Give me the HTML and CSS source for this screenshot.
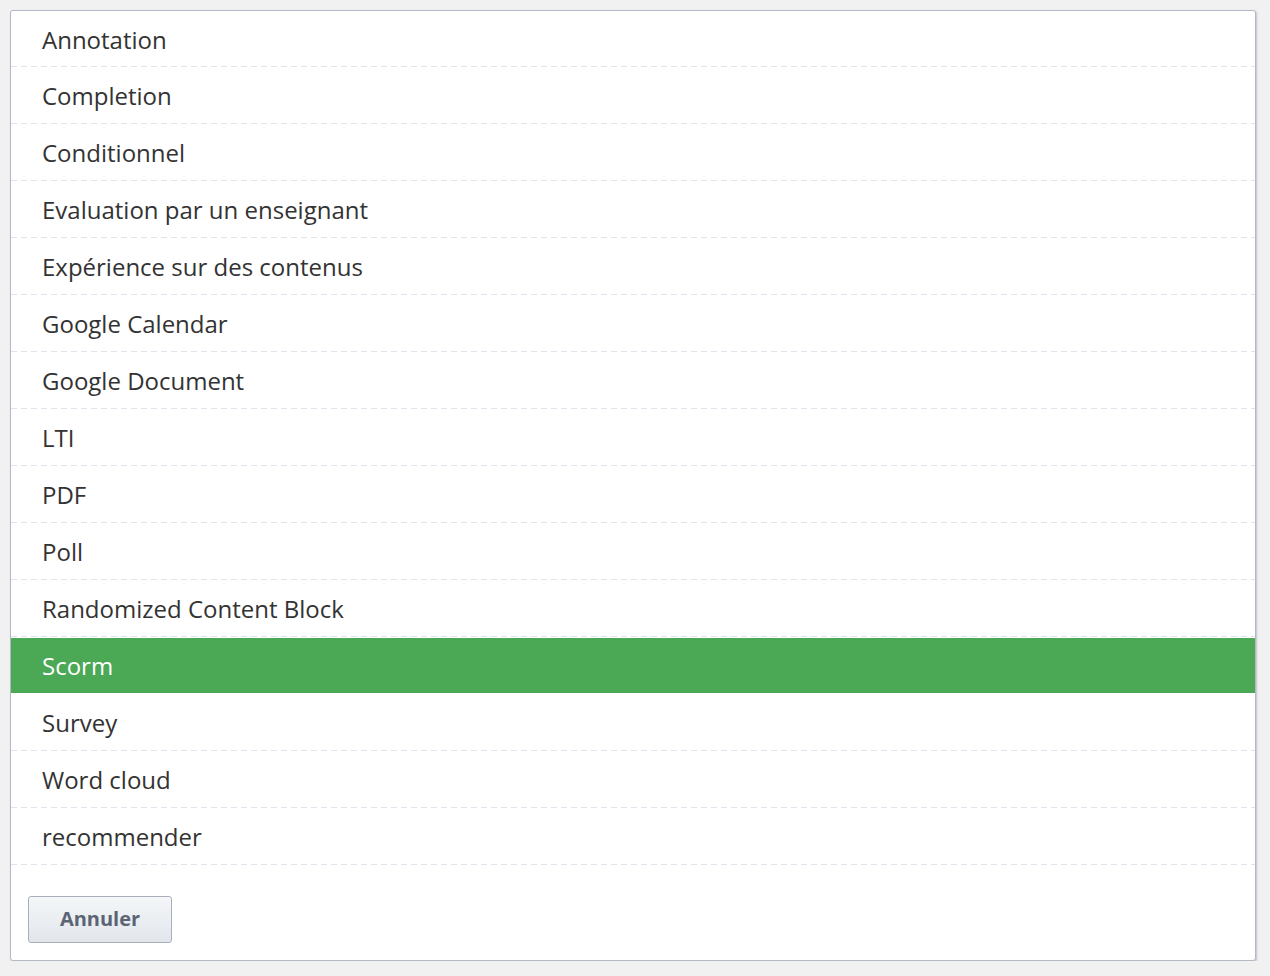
FILE: index.html
```html
<!DOCTYPE html>
<html lang="fr">
<head>
<meta charset="utf-8">
<title>Composants</title>
<link rel="stylesheet" href="styles.css">
</head>
<body>
<div class="panel">
  <ul class="list">
    <li class="item first">Annotation</li>
    <li class="item">Completion</li>
    <li class="item">Conditionnel</li>
    <li class="item">Evaluation par un enseignant</li>
    <li class="item">Expérience sur des contenus</li>
    <li class="item">Google Calendar</li>
    <li class="item">Google Document</li>
    <li class="item">LTI</li>
    <li class="item">PDF</li>
    <li class="item">Poll</li>
    <li class="item">Randomized Content Block</li>
    <li class="item selected">Scorm</li>
    <li class="item">Survey</li>
    <li class="item">Word cloud</li>
    <li class="item">recommender</li>
  </ul>
  <div class="footer">
    <button class="btn-cancel" type="button">Annuler</button>
  </div>
</div>
</body>
</html>
```
FILE: styles.css
```css
html, body {
  margin: 0;
  padding: 0;
  background: #f1f1f1;
}
body {
  padding: 10px 14px 0 10px;
  font-family: "Open Sans", "Noto Sans", sans-serif;
  color: #333333;
}
.panel {
  background: #ffffff;
  border: 1px solid #b3b8c7;
  border-radius: 3px;
  box-shadow: 1px 1px 2px rgba(80, 85, 100, 0.3);
  height: 951px;
  box-sizing: border-box;
  display: flex;
  flex-direction: column;
}
.list {
  list-style: none;
  margin: 0;
  padding: 0;
}
.item {
  height: 57px;
  box-sizing: border-box;
  display: flex;
  align-items: center;
  padding-left: 31px;
  padding-top: 1px;
  font-size: 24px;
  line-height: 1;
  color: #333333;
  background-image: linear-gradient(to right, #e0e4ec 60%, transparent 60%);
  background-size: 10px 1px;
  background-repeat: repeat-x;
  background-position: 0 100%;
}
.item.first {
  height: 56px;
}
.item.selected {
  background: #4ba855;
  color: #ffffff;
  height: 55px;
  margin-top: 1px;
  margin-bottom: 1px;
  padding-top: 0;
}
.footer {
  padding: 31px 0 0 17px;
}
.btn-cancel {
  width: 144px;
  height: 47px;
  border: 1px solid #a9afbc;
  border-radius: 3px;
  background: linear-gradient(to bottom, #f4f6f8, #e2e6eb);
  font-family: "Open Sans", "Noto Sans", sans-serif;
  font-weight: 700;
  font-size: 20px;
  line-height: 1;
  color: #5b6475;
  padding: 0 0 2px 0;
  cursor: pointer;
}
```
